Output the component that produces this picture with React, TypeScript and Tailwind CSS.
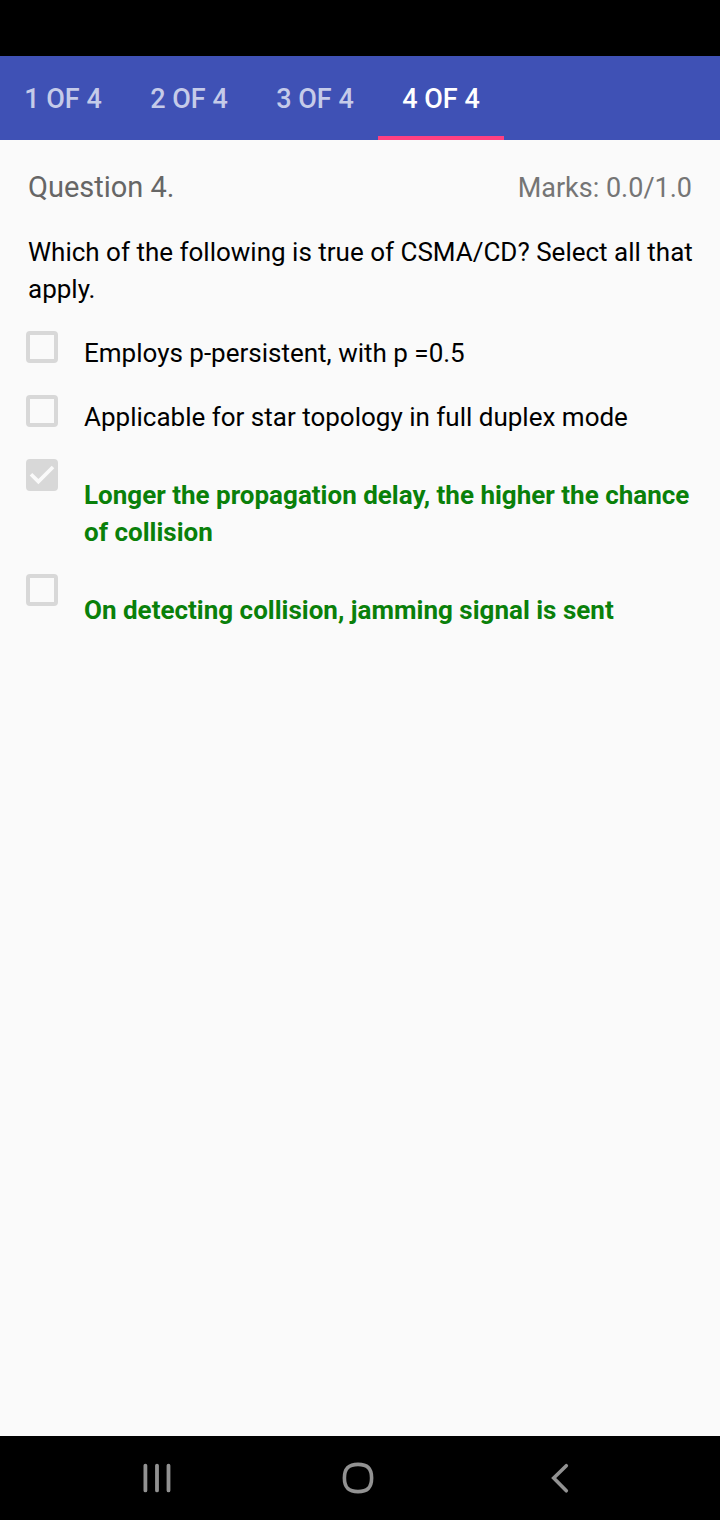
import { useState } from "react";

const tabs = ["1 OF 4", "2 OF 4", "3 OF 4", "4 OF 4"];

const options = [
  { text: "Employs p-persistent, with p =0.5", correct: false, checked: false },
  { text: "Applicable for star topology in full duplex mode", correct: false, checked: false },
  { text: "Longer the propagation delay, the higher the chance of collision", correct: true, checked: true },
  { text: "On detecting collision, jamming signal is sent", correct: true, checked: false },
];

function Option({ id, text, correct, checked }: { id: string; text: string; correct: boolean; checked: boolean }) {
  return (
    <li className="flex items-start gap-[26px] pb-[23px]">
      <span className="relative block size-8 shrink-0">
        <input
          id={id}
          type="checkbox"
          disabled
          defaultChecked={checked}
          className="peer block size-8 appearance-none rounded-[4px] border-4 border-[#d8d8d8] checked:bg-[#d8d8d8]"
        />
        <svg
          viewBox="0 0 32 32"
          aria-hidden="true"
          className="pointer-events-none absolute inset-0 hidden size-8 peer-checked:block"
          fill="none"
          stroke="#fafafa"
          strokeWidth="3.6"
        >
          <path d="M5 15.2 12.4 22.6 27 8" />
        </svg>
      </span>
      <label
        htmlFor={id}
        className={correct ? "pt-[18px] font-bold text-[#0a800a]" : "pt-1 text-black"}
      >
        {text}
      </label>
    </li>
  );
}

export default function App() {
  const [active, setActive] = useState(3);
  return (
    <div className="flex min-h-screen flex-col bg-[#fafafa] font-['Roboto',sans-serif]">
      <div className="h-14 bg-black" />
      <nav className="flex h-[84px] bg-[#3f51b5]">
        {tabs.map((tab, i) => (
          <button
            key={tab}
            type="button"
            onClick={() => setActive(i)}
            className={
              i === active
                ? "w-[126px] border-b-4 border-[#ff4081] pt-1.5 text-[27px] leading-8 font-medium whitespace-nowrap text-white"
                : "w-[126px] border-b-4 border-transparent pt-1.5 text-[27px] leading-8 font-medium whitespace-nowrap text-[#c5cbe9]"
            }
          >
            {tab}
          </button>
        ))}
      </nav>
      <main className="grow px-7 pt-7">
        <header className="flex h-10 items-center justify-between">
          <h1 className="text-[29px] text-[#666666]">Question 4.</h1>
          <p className="text-[27px] text-[#757575]">Marks: 0.0/1.0</p>
        </header>
        <p className="-mr-2 mt-[26px] text-[26px] leading-[37px] text-black">
          Which of the following is true of CSMA/CD? Select all that apply.
        </p>
        <ul className="-ml-0.5 mt-[23px] text-[26px] leading-[37px]">
          {options.map((o, i) => (
            <Option key={o.text} id={`option-${i}`} {...o} />
          ))}
        </ul>
      </main>
      <footer className="flex h-[84px] items-center justify-center gap-[170px] bg-black pr-1 text-[#929292]">
        <button type="button" aria-label="Recent apps">
          <svg width="32" height="32" viewBox="0 0 32 32" fill="none" stroke="currentColor" strokeWidth="3.8" strokeLinecap="round">
            <path d="M5.4 3.6v24.8M17 3.6v24.8M28.5 3.6v24.8" />
          </svg>
        </button>
        <button type="button" aria-label="Home">
          <svg width="32" height="32" viewBox="0 0 32 32" fill="none" stroke="currentColor" strokeWidth="3.6">
            <path d="M16 2.4C25.5 2.4 29.6 6.5 29.6 16S25.5 29.6 16 29.6 2.4 25.5 2.4 16 6.5 2.4 16 2.4Z" />
          </svg>
        </button>
        <button type="button" aria-label="Back">
          <svg width="32" height="32" viewBox="0 0 32 32" fill="none" stroke="currentColor" strokeWidth="3.6" strokeLinecap="round">
            <path d="M22.3 3.7 9.7 16 22.3 28.8" />
          </svg>
        </button>
      </footer>
    </div>
  );
}
